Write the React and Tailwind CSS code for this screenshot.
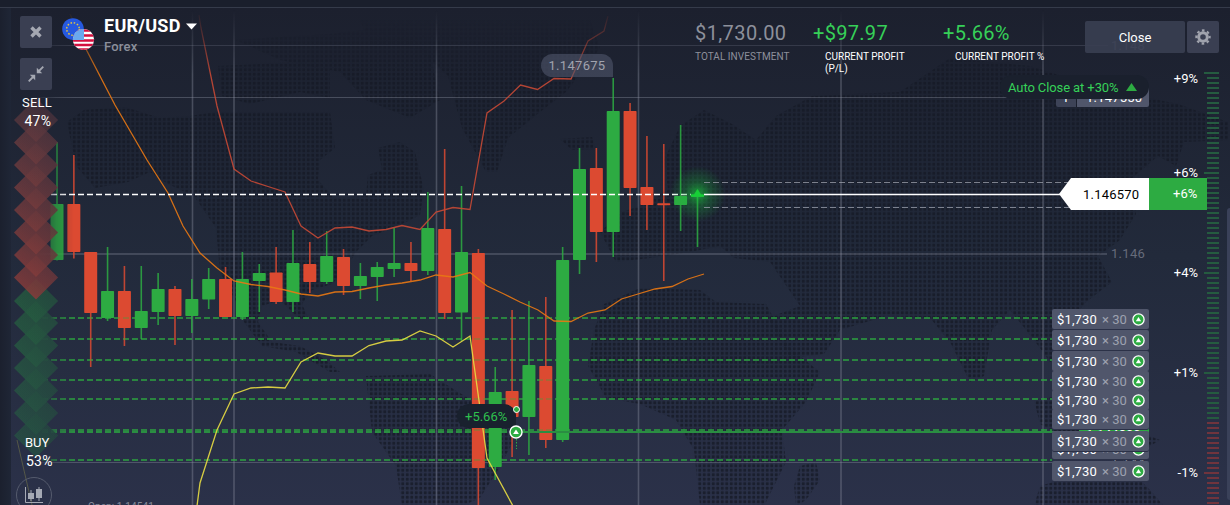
import React from "react";

const X0 = 57;
const STEP = 16.855;

// [direction, high, low, bodyTop, bodyBottom]
const CANDLES = [
  ["g", 142, 260.5, 204, 260], ["r", 155, 258.5, 204, 252], ["r", 252, 367, 252, 313],
  ["g", 247, 321, 291, 318], ["r", 266, 346, 291, 328], ["g", 266, 339, 311, 328],
  ["g", 273, 325, 289, 312], ["r", 286, 345, 289, 316], ["g", 279, 333, 299, 316],
  ["g", 268, 309, 279, 299.5], ["r", 267, 317, 279, 317], ["g", 252, 320, 279, 317],
  ["g", 264, 312, 273, 281], ["r", 247, 304, 272.5, 302], ["g", 230, 312, 263, 302],
  ["r", 242, 293, 264, 282], ["g", 231, 284, 256, 282], ["r", 249, 295, 257, 286],
  ["g", 263, 299, 276, 286], ["g", 262, 301, 267, 277], ["g", 228, 277, 263, 269],
  ["r", 242, 281, 263, 271], ["g", 192, 275, 228, 271], ["r", 149, 319, 229, 313],
  ["g", 186, 341, 252, 312.5], ["r", 249, 506, 253, 468], ["g", 367, 480, 392, 467],
  ["r", 310, 457, 391, 417], ["g", 301, 455, 365, 417], ["r", 297, 448, 366, 440],
  ["g", 247, 442, 260, 440], ["g", 148, 274, 169, 260], ["r", 148, 262, 168, 232],
  ["g", 78, 257, 111, 232], ["r", 103, 216, 111, 188], ["r", 136, 230, 187, 205],
  ["r", 144, 281, 203.3, 205.2], ["g", 125, 231, 196, 205], ["g", 190, 247, 194.5, 197],
];

const UPPER = "199,15 201,28 217,106 234,169 251,181 268,186.5 285,192 301,226 318,238 335,228 352,227 369,231 386,229.5 402,225.5 420,229.5 436,212 453,207.5 470,209.5 487,113 504,101 520.5,85 537.5,89.5 554,78.5 571,79 588,41 604,31 608,16";
const MIDDLE = "70,14 87,51 115,105 147,160 168,193 183,226 200,253 217,268 234,281 251,284.5 268,286.5 285,290 301,294 318,296 335,292 352,291.5 369,288 386,285 402,283 420,280 436,275 453,277 470,272.5 487,286 504,294 520,302 538,310 554,321 571,321.5 588,313 605,310 621.5,299 638,294 655,289 672,286.5 688,279 704,274";
const LOWER = "197,506 200,483 217,430 234,394 251,388 268,387 285,388 301,362 318,353 335,356 352,356 369,345.5 386,341 402,340 420,331 436,336 453,347 470,336 487,458 513,506";

const LAND = [
  "67,122 84,110 125,107 160,118 190,116 215,112 330,112 335,148 320,160 318,180 334,198 366,196 368,175 382,170 378,148 400,142 415,152 424,190 420,215 398,226 372,236 356,252 345,270 332,284 312,290 302,304 308,318 298,318 280,300 262,306 258,322 272,342 300,346 326,360 340,372 330,372 296,352 262,346 244,322 234,298 220,272 216,228 194,196 168,184 150,172 128,182 95,188 76,166",
  "218,66 300,62 330,70 330,98 300,92 250,104 222,96",
  "236,40 330,34 400,26 430,54 440,100 410,118 366,100 340,72 280,60",
  "360,20 590,20 600,48 566,92 540,112 508,138 497,172 486,172 462,128 448,76 420,50 370,44",
  "560,139 592,137 596,149 572,150",
  "366,376 430,374 458,392 472,400 512,418 514,440 498,470 480,498 462,506 402,506 396,466 372,432",
  "600,232 622,212 640,206 668,190 664,160 680,126 704,110 732,124 756,140 776,116 812,96 900,92 950,58 1030,66 1100,88 1178,104 1228,122 1228,140 1184,142 1176,166 1158,156 1130,180 1136,214 1120,240 1098,256 1112,282 1086,302 1062,330 1066,352 1050,362 1034,340 1010,310 992,330 984,376 970,382 950,342 930,318 886,316 840,330 824,354 790,358 768,318 800,306 770,262 734,258 720,246 690,252 650,258 616,262",
  "604,304 640,288 700,290 716,302 766,304 790,348 820,372 806,402 782,430 786,462 764,506 700,506 694,450 676,420 640,404 606,398 588,366 594,330",
  "1034,400 1060,396 1090,418 1120,424 1160,440 1140,452 1080,446 1040,424",
  "1040,486 1080,474 1130,470 1150,490 1164,506 1034,506",
  "800,466 816,462 820,480 806,500 796,506 794,486",
];

const ORDERS_Y = [318, 339, 360, 380, 399, 430, 460];
const SELL_Y = [120, 142.5, 165, 187.5, 210, 232.5, 255, 277.5];
const BUY_Y = [301, 323, 345.5, 368, 390.5, 413, 435.5];
const GRID_X = [192.5, 234, 436.5, 638.5, 841, 1043];

function Diamond({ y, fill, shade, opacity }) {
  return (
    <g opacity={opacity}>
      <path d={`M14 ${y}L36 ${y - 22}L58 ${y}L36 ${y + 22}Z`} fill={fill} />
      <path d={`M14 ${y}L36 ${y - 22}L58 ${y}L36 ${y + 22}Z`} fill={shade} />
    </g>
  );
}

function Chart() {
  return (
    <svg className="absolute inset-0" width="1230" height="505" viewBox="0 0 1230 505">
      <defs>
        <linearGradient id="fadeLeft" x1="0" x2="1230" y1="0" y2="0" gradientUnits="userSpaceOnUse">
          <stop offset="0.026" stopColor="#fff" stopOpacity="0" />
          <stop offset="0.046" stopColor="#fff" stopOpacity="0.75" />
          <stop offset="0.06" stopColor="#fff" stopOpacity="1" />
        </linearGradient>
        <linearGradient id="fadeTop" x1="0" x2="0" y1="10" y2="75" gradientUnits="userSpaceOnUse">
          <stop offset="0" stopColor="#fff" stopOpacity="0" />
          <stop offset="1" stopColor="#fff" stopOpacity="1" />
        </linearGradient>
        <mask id="left" maskUnits="userSpaceOnUse" x="0" y="0" width="1230" height="505"><rect width="1230" height="505" fill="url(#fadeLeft)" /></mask>
        <mask id="top" maskUnits="userSpaceOnUse" x="0" y="0" width="1230" height="505"><rect width="1230" height="505" fill="url(#fadeTop)" /></mask>
        <linearGradient id="sell" x1="0" x2="0" y1="98" y2="300" gradientUnits="userSpaceOnUse">
          <stop offset="0" stopColor="#5e3a40" />
          <stop offset="1" stopColor="#8a3c3a" />
        </linearGradient>
        <linearGradient id="buy" x1="0" x2="0" y1="278" y2="458" gradientUnits="userSpaceOnUse">
          <stop offset="0" stopColor="#265f40" />
          <stop offset="1" stopColor="#274f44" />
        </linearGradient>
        <linearGradient id="shade" x1="1" x2="0.3" y1="0.1" y2="0.9">
          <stop offset="0" stopColor="#22283a" stopOpacity="0.4" />
          <stop offset="1" stopColor="#22283a" stopOpacity="0" />
        </linearGradient>
        <radialGradient id="glow">
          <stop offset="0" stopColor="#19d23c" stopOpacity="0.7" />
          <stop offset="0.45" stopColor="#19b83a" stopOpacity="0.3" />
          <stop offset="1" stopColor="#19b83a" stopOpacity="0" />
        </radialGradient>
        <pattern id="dots" width="4.5" height="4.5" patternUnits="userSpaceOnUse">
          <rect x="0.75" y="0.75" width="3" height="3" rx="0.9" fill="#151925" />
        </pattern>
      </defs>

      <g fill="url(#dots)" opacity="0.72" mask="url(#top)">
        {LAND.map((p) => <polygon key={p} points={p} />)}
      </g>

      <g stroke="#8d93a3" strokeOpacity="0.38" mask="url(#left)">
        <g mask="url(#top)">
          {GRID_X.map((x) => <path key={x} d={`M${x} 10V505`} strokeWidth="1.6" />)}
        </g>
        <path d="M20 45.5H1108" strokeOpacity="0.22" />
        <path d="M20 97.5H1149" />
        <path d="M20 254H1107" strokeWidth="2" strokeOpacity="0.3" />
        <path d="M20 462.5H1107" />
      </g>

      <g mask="url(#left)">
        <g stroke="#2dad40" strokeWidth="2" strokeOpacity="0.56">
          {ORDERS_Y.map((y) => <path key={y} d={`M42 ${y}H1052`} strokeDasharray="6 3" />)}
        </g>
        <path d="M42 432H516" stroke="#2a8d42" strokeWidth="2" strokeDasharray="6 3" />
        {CANDLES.map(([dir, high, low, top, bottom], i) => {
          const x = X0 + i * STEP;
          const color = dir === "g" ? "#2dab42" : "#dc4a31";
          return (
            <g key={i} fill={color}>
              <rect x={x - 0.8} y={high} width="1.6" height={low - high} fillOpacity="0.85" />
              <rect x={x - 6.5} y={top} width="13" height={bottom - top} rx="0.8" />
            </g>
          );
        })}
        <g stroke="#2dad40" strokeOpacity="0.3" strokeWidth="2">
          {ORDERS_Y.map((y) => <path key={y} d={`M42 ${y}H1052`} strokeDasharray="6 3" />)}
        </g>
        <g fill="none" strokeWidth="1.3">
          <g mask="url(#top)"><polyline points={UPPER} stroke="#c64935" strokeOpacity="0.9" /></g>
          <g mask="url(#top)"><polyline points={MIDDLE} stroke="#e97813" strokeOpacity="0.9" /></g>
          <polyline points={LOWER} stroke="#e5da42" strokeOpacity="0.92" />
        </g>
        <path d="M51 194.5H691" stroke="#fff" strokeWidth="1.3" strokeDasharray="6 3" />
      </g>
      <path d="M17 440L32 505" stroke="#d8cf4c" strokeOpacity="0.25" fill="none" />

      <path d="M516 432H1149" stroke="#2a8d42" strokeWidth="2.2" />
      <circle cx="697.5" cy="194" r="28" fill="url(#glow)" />
      <path d="M704 182.500H1070M704 207.500H1070" stroke="#9ea2ad" strokeOpacity="0.75" strokeDasharray="6 3" />
      <path d="M704 194.500H1060" stroke="#fff" strokeWidth="1.5" />
      <path d="M691 196.500V194.500H694L697.500 189L701 194.500H704V196.500Z" fill="#17cf36" />

      <path d="M516.500 439V449" stroke="#2dab42" strokeDasharray="1.500 1.500" />

      {[...BUY_Y].reverse().map((y) => <Diamond key={y} y={y} fill="url(#buy)" shade="url(#shade)" opacity="0.86" />)}
      {[...SELL_Y].reverse().map((y) => <Diamond key={y} y={y} fill="url(#sell)" shade="url(#shade)" opacity={y < 130 ? 0.7 : 0.86} />)}

      {Array.from({ length: 87 }, (_, i) => {
        const wide = i % 20 === 0;
        return (
          <rect
            key={i}
            x={wide ? 1204 : 1207}
            y={72 + i * 5}
            width={wide ? 15 : 12}
            height="2"
            fill={i < 70 ? "#255b40" : "#70343d"}
          />
        );
      })}
      <rect x="1227" y="208" width="6" height="292" rx="3" fill="#3a4159" />
    </svg>
  );
}

function UpBadge({ size }) {
  return (
    <svg className="shrink-0" width={size} height={size} viewBox="0 0 13 13">
      <circle cx="6.5" cy="6.5" r="5.6" fill="#2dab42" stroke="#fff" strokeWidth="1.3" />
      <path d="M3.800 8.300L6.500 4.100L9.200 8.300Z" fill="#fff" />
    </svg>
  );
}

function OrderTag({ className }) {
  return (
    <div className={`absolute left-[1052px] flex h-[20px] w-[97px] items-center rounded-[2px] bg-[#50566b] pl-[5px] text-[13px] leading-5 shadow-[0_1px_0_#2b3147] ${className}`}>
      <span className="w-[40px] pt-px tracking-[0.15px] text-white">$1,730</span>
      <span className="w-[34.5px] pl-[5px] pt-px text-[13px] text-[#9ea2b0]">× 30</span>
      <UpBadge size={13} />
    </div>
  );
}

function Levels() {
  return (
    <>
      <div className="absolute left-[1111px] top-[245px] text-[13px] leading-[18px] tracking-[0.3px] text-[#666b7a]">1.146</div>
      <div className="absolute left-[1111px] top-[454px] text-[13px] leading-[18px] tracking-[0.3px] text-[#858a99]">1.144</div>
      <div className="absolute left-[1111px] top-[37px] text-[13px] leading-[18px] tracking-[0.3px] text-[#666b7a]">1.148</div>

      <div className="absolute left-[1056px] top-[87px] flex h-[20px] gap-px text-[13px] leading-[22px] text-white">
        <div className="w-[20px] rounded-l-[2px] bg-[#3d4357] text-center">T</div>
        <div className="w-[72px] rounded-r-[2px] bg-[#50566b] pl-[9px] tracking-[0.2px]">1.147550</div>
      </div>
      <div className="absolute left-[1000px] top-[75px] flex h-[24px] w-[149px] items-center justify-between rounded-[12px] bg-[#1a202d] pl-[8px] pr-[12px] text-[13px] text-[#36d058]">
        <span className="whitespace-nowrap pt-px tracking-[-0.1px]">Auto Close at +30%</span>
        <svg width="11" height="8" viewBox="0 0 11 8"><path d="M0 8L5.500 0L11 8Z" fill="#2dab42" /></svg>
      </div>

      <div className="absolute left-[541px] top-[54px] flex h-[23px] w-[72px] items-center justify-center rounded-[12px] rounded-br-none bg-[#50566d]/60 pt-px text-[13px] tracking-[0.3px] text-[#a0a3ae]">1.147675</div>

      <div className="absolute left-[457px] top-[404px] flex h-[24px] w-[59px] items-center rounded-[12px] rounded-br-none bg-[#19212e] pl-[8px] pt-px text-[13px] text-[#2fc04e]">+5.66%</div>
      <div className="absolute left-[513px] top-[406px] size-[7px] rounded-full border border-white bg-[#2dab42]" />
      <div className="absolute left-[509px] top-[425px]"><UpBadge size={14} /></div>

      <div className="absolute left-[1079px] top-[427px] h-[16px] w-[70px] bg-[#2dab42] pl-[7px] text-[13px] leading-4 text-white">1.144800</div>

      <OrderTag className="top-[309px]" />
      <OrderTag className="top-[330px]" />
      <OrderTag className="top-[351px]" />
      <OrderTag className="top-[371px]" />
      <OrderTag className="top-[390px]" />
      <OrderTag className="top-[409px]" />
      <OrderTag className="top-[439px]" />
      <OrderTag className="top-[431px]" />
      <OrderTag className="top-[461px]" />

      <div className="absolute left-[1059px] top-[178px] flex h-[32px] text-[13px] leading-8">
        <svg width="12" height="32" viewBox="0 0 12 32"><path d="M12 0V32L0 16Z" fill="#fff" /></svg>
        <div className="w-[78px] bg-white pl-[12px] pt-px leading-[31px] tracking-[0.2px] text-black">1.146570</div>
        <div className="w-[58px] bg-[#2dab42] pl-[24px] text-white">+6%</div>
      </div>

      <div className="absolute left-[88px] top-[501px] text-[10px] leading-3 tracking-[0.1px] text-[#858a99]">Open: 1.14541</div>
    </>
  );
}

function Flags() {
  return (
    <svg width="34" height="34" viewBox="0 0 34 34">
      <circle cx="11" cy="11" r="10.800" fill="#2659e0" />
      <circle cx="11" cy="11" r="6.300" fill="none" stroke="#e3c53e" strokeWidth="1.500" strokeDasharray="1.500 1.800" />
      <clipPath id="us"><circle cx="21.500" cy="21.500" r="10.600" /></clipPath>
      <g clipPath="url(#us)">
        <rect x="10" y="10" width="24" height="24" fill="#fff" />
        <path d="M10 12.500H34M10 17.500H34M10 22.500H34M10 27H34M10 31.500H34" stroke="#d3103f" strokeWidth="2.500" />
        <rect x="10" y="10" width="12" height="12" fill="#6aa9ee" />
      </g>
    </svg>
  );
}

function Rail() {
  return (
    <aside className="relative flex w-[62px] shrink-0 flex-col pl-[20px] pt-[8px] text-white *:shrink-0">
      <button className="flex size-[32px] items-center justify-center rounded-[2px] bg-[#3a3f52]">
        <svg width="12" height="12" viewBox="0 0 12 12"><path d="M1.500 1.500L10.500 10.500M10.500 1.500L1.500 10.500" stroke="#a5a8b2" strokeWidth="3.400" /></svg>
      </button>
      <button className="mt-[10px] flex size-[32px] items-center justify-center rounded-[2px] bg-[#3a3f52]">
        <svg width="16" height="16" viewBox="0 0 16 16" fill="none" stroke="#a5a8b2" strokeWidth="1.800">
          <path d="M15.300 0.700L10 6M0.700 15.300L6 10" />
          <path d="M8.800 1.800V7.200H14.200ZM7.200 14.200V8.800H1.800Z" fill="#a5a8b2" stroke="none" />
        </svg>
      </button>
      <div className="mt-[4px] pl-[2px] text-[13px] leading-[18px] tracking-[0.2px]">SELL</div>
      <div className="pl-[4.500px] text-[14px] leading-[19px] tracking-[0.2px]">47%</div>
      <div className="mt-[303px] pl-[5px] text-[13px] leading-[18px]">BUY</div>
      <div className="pl-[6px] text-[14px] leading-[18px] tracking-[0.2px]">53%</div>
      <div className="-ml-[4px] mt-[7px] flex size-[36px] items-center justify-center rounded-full border border-[#555b6d]">
        <svg width="18" height="16" viewBox="0 0 18 16">
          <path d="M0.500 0V15.500H18" fill="none" stroke="#a5a9b4" />
          <path d="M3 6H9V12H3ZM5.500 3H6.500V14H5.500ZM11 2H17V11H11ZM13.500 0H14.500V14H13.500Z" fill="#a5a9b4" />
        </svg>
      </div>
    </aside>
  );
}

function Header() {
  return (
    <header className="flex min-w-0 flex-1 items-start">
      <div className="mt-[10px] w-[34px]"><Flags /></div>
      <div className="ml-[8px] mt-[6px] w-[591px]">
        <div className="flex items-center gap-[6px] font-bold leading-[24px] text-white">
          <span className="w-[76px] whitespace-nowrap text-[18px] tracking-[0.25px]">EUR/USD</span>
          <svg width="11" height="7" viewBox="0 0 11 7"><path d="M0 0.500H11L5.500 6.500Z" fill="#fff" /></svg>
        </div>
        <div className="text-[13px] font-medium leading-[18px] tracking-[0.2px] text-[#8b8f9b]">Forex</div>
      </div>
      <div className="mt-[12px] w-[118px] text-[#8d909b]">
        <div className="text-[20px] leading-[26px] tracking-[0.4px]">$1,730.00</div>
        <div className="mt-[5px] text-[10px] leading-[12px] tracking-[0.05px]">TOTAL INVESTMENT</div>
      </div>
      <div className="mt-[12px] w-[130px]">
        <div className="text-[20px] leading-[26px] tracking-[0.3px] text-[#36d058]">+$97.97</div>
        <div className="mt-[5px] w-[100px] pl-[12px] text-[10px] leading-[12px] text-white">CURRENT PROFIT (P/L)</div>
      </div>
      <div className="mt-[12px] w-[142px]">
        <div className="text-[20px] leading-[26px] tracking-[0.3px] text-[#36d058]">+5.66%</div>
        <div className="mt-[5px] whitespace-nowrap pl-[12px] text-[10px] leading-[12px] text-white">CURRENT PROFIT %</div>
      </div>
      <button className="mt-[13px] h-[32px] w-[100px] rounded-[2px] bg-[#3a3f52]/90 pt-px text-[13px] text-white">Close</button>
      <button className="ml-[2px] mt-[13px] flex h-[32px] w-[32px] items-center justify-center rounded-[2px] bg-[#3a3f52]">
        <svg width="16" height="16" viewBox="0 0 16 16">
          <circle cx="8" cy="8" r="4.300" fill="none" stroke="#a0a3ad" strokeWidth="3" />
          <circle cx="8" cy="8" r="6.600" fill="none" stroke="#a0a3ad" strokeWidth="2.200" strokeDasharray="2.600 2.584" strokeDashoffset="1.300" />
        </svg>
      </button>
    </header>
  );
}

function Percent({ className, children }) {
  return <div className={`text-right text-[13px] leading-[18px] text-white ${className}`}>{children}</div>;
}

export default function App() {
  return (
    <div className="relative flex h-[505px] w-[1230px] flex-col overflow-hidden bg-[#1a1f2c] font-['Roboto',sans-serif]">
      <div className="h-[8px] shrink-0 border-b border-[#353b4a]" />
      <div className="flex flex-1 bg-linear-to-b from-[#1b202d] via-[#222a3b] to-[#293049]">
        <div className="w-[11px] bg-linear-to-r from-[#1b202e] to-[#1f2636]" />
        <div className="flex-1 bg-linear-to-b from-[#1c202e] via-[#222a3b] to-[#2b3149]" />
      </div>
      <Chart />
      <Levels />
      <div className="absolute inset-x-0 bottom-0 top-[8px] flex">
        <Rail />
        <Header />
      </div>
      <div className="absolute left-[1160px] top-[70px] flex w-[38px] flex-col">
        <Percent>+9%</Percent>
        <Percent className="mt-[76px]">+6%</Percent>
        <Percent className="mt-[82px]">+4%</Percent>
        <Percent className="mt-[82px]">+1%</Percent>
        <Percent className="mt-[82px]">-1%</Percent>
      </div>
    </div>
  );
}
